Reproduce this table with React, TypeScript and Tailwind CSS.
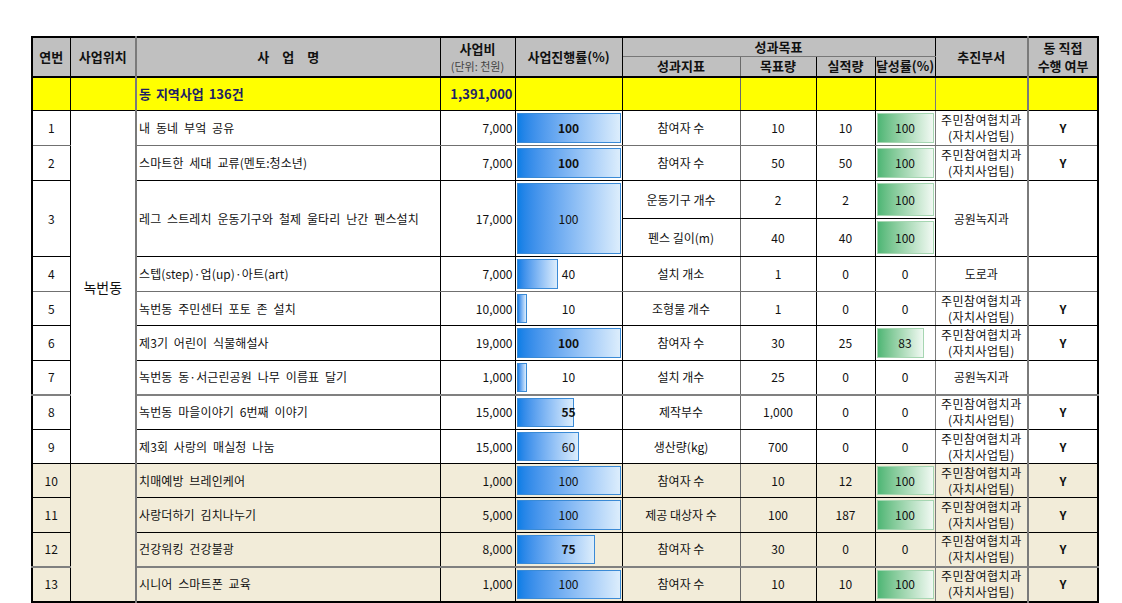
type Sub = { ind: string; target: string; actual: string; rate: number };
type Row = {
  no: number;
  name: string;
  cost: string;
  prog: number;
  bold?: boolean;
  subs: Sub[];
  dept: "team" | "park" | "road";
  y: boolean;
  h: string;
  bottom?: string;
};

const rows: Row[] = [
  { no: 1, name: "내 동네 부엌 공유", cost: "7,000", prog: 100, bold: true, subs: [{ ind: "참여자 수", target: "10", actual: "10", rate: 100 }], dept: "team", y: true, h: "h-[35px]", bottom: "border-b-[#707070]" },
  { no: 2, name: "스마트한 세대 교류(멘토:청소년)", cost: "7,000", prog: 100, bold: true, subs: [{ ind: "참여자 수", target: "50", actual: "50", rate: 100 }], dept: "team", y: true, h: "h-[35px]" },
  {
    no: 3,
    name: "레그 스트레치 운동기구와 철제 울타리 난간 펜스설치",
    cost: "17,000",
    prog: 100,
    subs: [
      { ind: "운동기구 개수", target: "2", actual: "2", rate: 100 },
      { ind: "펜스 길이(m)", target: "40", actual: "40", rate: 100 },
    ],
    dept: "park",
    y: false,
    h: "h-[38px]",
  },
  { no: 4, name: "스텝(step)·업(up)·아트(art)", cost: "7,000", prog: 40, subs: [{ ind: "설치 개소", target: "1", actual: "0", rate: 0 }], dept: "road", y: false, h: "h-[35px]", bottom: "border-b-[#707070]" },
  { no: 5, name: "녹번동 주민센터 포토 존 설치", cost: "10,000", prog: 10, subs: [{ ind: "조형물 개수", target: "1", actual: "0", rate: 0 }], dept: "team", y: true, h: "h-[34px]" },
  { no: 6, name: "제3기 어린이 식물해설사", cost: "19,000", prog: 100, bold: true, subs: [{ ind: "참여자 수", target: "30", actual: "25", rate: 83 }], dept: "team", y: true, h: "h-[35px]" },
  { no: 7, name: "녹번동 동·서근린공원 나무 이름표 달기", cost: "1,000", prog: 10, subs: [{ ind: "설치 개수", target: "25", actual: "0", rate: 0 }], dept: "park", y: false, h: "h-[34px]", bottom: "border-b-2 border-b-[#808080]" },
  { no: 8, name: "녹번동 마을이야기 6번째 이야기", cost: "15,000", prog: 55, bold: true, subs: [{ ind: "제작부수", target: "1,000", actual: "0", rate: 0 }], dept: "team", y: true, h: "h-[35px]" },
  { no: 9, name: "제3회 사랑의 매실청 나눔", cost: "15,000", prog: 60, subs: [{ ind: "생산량(kg)", target: "700", actual: "0", rate: 0 }], dept: "team", y: true, h: "h-[34px]" },
  { no: 10, name: "치매예방 브레인케어", cost: "1,000", prog: 100, subs: [{ ind: "참여자 수", target: "10", actual: "12", rate: 100 }], dept: "team", y: true, h: "h-[34px]" },
  { no: 11, name: "사랑더하기 김치나누기", cost: "5,000", prog: 100, subs: [{ ind: "제공 대상자 수", target: "100", actual: "187", rate: 100 }], dept: "team", y: true, h: "h-[35px]" },
  { no: 12, name: "건강워킹 건강불광", cost: "8,000", prog: 75, bold: true, subs: [{ ind: "참여자 수", target: "30", actual: "0", rate: 0 }], dept: "team", y: true, h: "h-[34px]", bottom: "border-b-2 border-b-[#808080]" },
  { no: 13, name: "시니어 스마트폰 교육", cost: "1,000", prog: 100, subs: [{ ind: "참여자 수", target: "10", actual: "10", rate: 100 }], dept: "team", y: true, h: "h-[35px]" },
];

const td = "border border-black p-0 align-middle";
const head = "border border-black p-0 align-middle bg-[#c0c0c0] font-bold text-[13px] text-center leading-[18px]";

function ProgressBar({ value, bold }: { value: number; bold?: boolean }) {
  return (
    <>
      <div
        className="absolute left-[1px] top-[2px] bottom-[2px] border border-[#3a8ad6] bg-linear-to-r from-[#0a7ee6] to-[#dcedfc]"
        style={{ width: `${(value / 100) * 104}px` }}
      />
      <span className={`relative text-[12px] ${bold ? "font-bold" : ""}`}>{value}</span>
    </>
  );
}

function RateBar({ value }: { value: number }) {
  if (value === 0) return <span className="text-[12px]">0</span>;
  return (
    <>
      <div
        className="absolute left-[1px] top-[2px] bottom-[2px] border border-[#a6d6b2] bg-linear-to-r from-[#4db675] to-[#f1f9f3]"
        style={{ width: `${(value / 100) * 57}px` }}
      />
      <span className="relative text-[12px]">{value}</span>
    </>
  );
}

function Dept({ kind }: { kind: Row["dept"] }) {
  if (kind === "park") return <span className="text-[12px]">공원녹지과</span>;
  if (kind === "road") return <span className="text-[12px]">도로과</span>;
  return (
    <div className="text-[12px] leading-[16px] tracking-[0.5px]">
      <div>주민참여협치과</div>
      <div>(자치사업팀)</div>
    </div>
  );
}

export default function App() {
  return (
    <div className="min-h-screen bg-white pt-[36px] pl-[31px] font-['Noto_Sans_CJK_KR',sans-serif] text-[#111]">
      <table className="w-[1066px] table-fixed border-collapse border-2 border-black">
        <colgroup>
          <col className="w-[38px]" />
          <col className="w-[66px]" />
          <col className="w-[304px]" />
          <col className="w-[75px]" />
          <col className="w-[107px]" />
          <col className="w-[118px]" />
          <col className="w-[76px]" />
          <col className="w-[59px]" />
          <col className="w-[60px]" />
          <col className="w-[93px]" />
          <col className="w-[70px]" />
        </colgroup>
        <thead>
          <tr className="h-[18px]">
            <th rowSpan={2} className={head}>연번</th>
            <th rowSpan={2} className={`${head} border-r-2 border-r-[#7a7a7a]`}>사업위치</th>
            <th rowSpan={2} className={head}>
              <div className="flex justify-center gap-[13px]">
                <span>사</span>
                <span>업</span>
                <span>명</span>
              </div>
            </th>
            <th rowSpan={2} className={head}>
              <div className="leading-[19px]">사업비</div>
              <div className="text-[11px] font-normal text-[#444] leading-[16px]">(단위: 천원)</div>
            </th>
            <th rowSpan={2} className={head}>사업진행률(%)</th>
            <th colSpan={4} className={`${head} border-b-[#777]`}>성과목표</th>
            <th rowSpan={2} className={`${head} border-r-2 border-r-[#7a7a7a]`}>추진부서</th>
            <th rowSpan={2} className={head}>
              <div className="leading-[18px]">동 직접</div>
              <div className="leading-[18px]">수행 여부</div>
            </th>
          </tr>
          <tr className="h-[20px] border-b-2 border-black">
            <th className={`${head} border-r-[#6a6a6a]`}>성과지표</th>
            <th className={head}>목표량</th>
            <th className={head}>실적량</th>
            <th className={`${head} border-r-[#7a7a7a]`}>달성률(%)</th>
          </tr>
        </thead>
        <tbody>
          <tr className="h-[34px] bg-[#ffff00] font-bold text-[13px] text-[#1f1f66]">
            <td className={td}></td>
            <td className={`${td} border-r-2 border-r-[#7a7a7a]`}></td>
            <td className={`${td} pl-[2px] [word-spacing:2px]`}>동 지역사업 136건</td>
            <td className={`${td} pr-[2px] text-right`}>1,391,000</td>
            <td className={td}></td>
            <td className={`${td} border-r-[#6a6a6a]`}></td>
            <td className={td}></td>
            <td className={td}></td>
            <td className={`${td} border-r-[#7a7a7a]`}></td>
            <td className={`${td} border-r-2 border-r-[#7a7a7a]`}></td>
            <td className={td}></td>
          </tr>
          {rows.map((r) => {
            const span = r.subs.length;
            const bg = r.no >= 10 ? "bg-[#f2ecd9]" : "bg-white";
            const b = r.bottom ?? "";
            const first = r.subs[0];
            return [
              <tr key={`${r.no}a`} className={`${r.h} ${bg} text-[12px]`}>
                <td rowSpan={span} className={`${td} ${b} text-center`}>{r.no}</td>
                {r.no === 1 && (
                  <td rowSpan={10} className={`${td} border-r-2 border-r-[#7a7a7a] text-center text-[14px]`}>녹번동</td>
                )}
                {r.no === 10 && (
                  <td rowSpan={4} className={`${td} border-r-2 border-r-[#7a7a7a]`}></td>
                )}
                <td rowSpan={span} className={`${td} ${b} pl-[2px] whitespace-nowrap [word-spacing:3px] tracking-[0.1px]`}>{r.name}</td>
                <td rowSpan={span} className={`${td} ${b} pr-[2px] text-right`}>{r.cost}</td>
                <td rowSpan={span} className={`${td} ${b} relative text-center`}>
                  <ProgressBar value={r.prog} bold={r.bold} />
                </td>
                <td className={`${td} ${span === 1 ? b : ""} border-r-[#6a6a6a] text-center`}>{first.ind}</td>
                <td className={`${td} ${span === 1 ? b : ""} text-center`}>{first.target}</td>
                <td className={`${td} ${span === 1 ? b : ""} text-center`}>{first.actual}</td>
                <td className={`${td} ${span === 1 ? b : ""} border-r-[#7a7a7a] relative text-center`}>
                  <RateBar value={first.rate} />
                </td>
                <td rowSpan={span} className={`${td} ${b} border-r-2 border-r-[#7a7a7a] text-center`}>
                  <Dept kind={r.dept} />
                </td>
                <td rowSpan={span} className={`${td} ${b} text-center font-bold text-[12px]`}>{r.y ? "Y" : ""}</td>
              </tr>,
              ...r.subs.slice(1).map((s, i) => (
                <tr key={`${r.no}s${i}`} className={`${r.h} ${bg} text-[12px]`}>
                  <td className={`${td} ${b} border-r-[#6a6a6a] text-center`}>{s.ind}</td>
                  <td className={`${td} ${b} text-center`}>{s.target}</td>
                  <td className={`${td} ${b} text-center`}>{s.actual}</td>
                  <td className={`${td} ${b} border-r-[#7a7a7a] relative text-center`}>
                    <RateBar value={s.rate} />
                  </td>
                </tr>
              )),
            ];
          })}
        </tbody>
      </table>
    </div>
  );
}
